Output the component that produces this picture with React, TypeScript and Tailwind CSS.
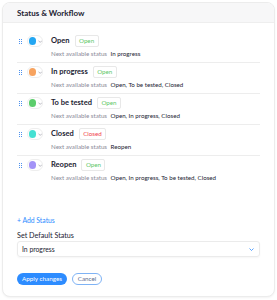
import React from "react";

type Row = { name: string; color: string; badge: string; badgeColor: string; next: string };

const rows: Row[] = [
  { name: "Open", color: "bg-[#23a6f2]", badge: "Open", badgeColor: "text-[#5cc767]", next: "In progress" },
  { name: "In progress", color: "bg-[#f7a35f]", badge: "Open", badgeColor: "text-[#5cc767]", next: "Open, To be tested, Closed" },
  { name: "To be tested", color: "bg-[#5ccd6c]", badge: "Open", badgeColor: "text-[#5cc767]", next: "Open, In progress, Closed" },
  { name: "Closed", color: "bg-[#45e0d2]", badge: "Closed", badgeColor: "text-[#f0424c]", next: "Reopen" },
  { name: "Reopen", color: "bg-[#a393f7]", badge: "Open", badgeColor: "text-[#5cc767]", next: "Open, In progress, To be tested, Closed" },
];

function Handle() {
  return (
    <div className="grid grid-cols-2 gap-x-[1px] gap-y-[1px] w-[3px]">
      {[0, 1, 2, 3, 4, 5].map((i) => (
        <span key={i} className="block w-[1px] h-[1px] bg-[#4d92ef]" />
      ))}
    </div>
  );
}

function Chevron({ className }: { className?: string }) {
  return (
    <svg width="5" height="3" viewBox="0 0 5 3" className={className}>
      <path d="M0.5 0.5 L2.5 2.5 L4.5 0.5" fill="none" stroke="currentColor" strokeWidth="0.8" />
    </svg>
  );
}

export default function App() {
  return (
    <div className="w-[277px] h-[300px] bg-white p-[2px] font-['Lato','Noto_Sans',sans-serif] text-[#232333]">
      <div className="h-[295px] rounded-[8px] border border-[#ececec] shadow-[0_1px_2px_rgba(0,0,0,0.05)] overflow-hidden flex flex-col bg-white">
        <div className="h-[20px] shrink-0 bg-[#f7f7f8] border-b border-[#eeeeee] px-[14px] flex items-center text-[8px] font-bold">
          Status &amp; Workflow
        </div>
        <div className="px-[14px] pt-[9px] flex flex-col">
          {rows.map((r, i) => (
            <div
              key={r.name}
              className={`flex pt-[3px] pb-[4px] ${i < rows.length - 1 ? "border-b border-[#ededed]" : ""}`}
            >
              <div className="w-[34px] shrink-0 h-[12px] flex items-center pl-[2px]">
                <Handle />
                <div className="ml-[5px] h-[12px] w-[16px] rounded-full border border-[#eeeeee] flex items-center pl-[1px]">
                  <span className={`block w-[8px] h-[8px] rounded-full ${r.color}`} />
                  <Chevron className="ml-[1.5px] text-[#9a9aa6]" />
                </div>
              </div>
              <div className="flex flex-col">
                <div className="h-[12px] flex items-center">
                  <span className="text-[7.5px] font-bold">{r.name}</span>
                  <span
                    className={`ml-[5px] h-[12px] px-[3.5px] border border-[#e8e8e8] rounded-[2px] flex items-center text-[6.2px] ${r.badgeColor}`}
                  >
                    {r.badge}
                  </span>
                </div>
                <div className="mt-[2px] h-[9px] flex items-center text-[6.2px]">
                  <span className="text-[#8a8a99]">Next available status</span>
                  <span className="ml-[3.5px] text-[#232333]">{r.next}</span>
                </div>
              </div>
            </div>
          ))}
          <div className="mt-[29px] h-[10px] flex items-center text-[6.8px] text-[#2d8cff]">+ Add Status</div>
          <div className="mt-[6px] h-[10px] flex items-center text-[7.2px]">Set Default Status</div>
          <div className="h-[16px] border border-[#ebebeb] rounded-[3px] shadow-[0_1px_2px_rgba(0,0,0,0.04)] flex items-center justify-between pl-[4px] pr-[5px] text-[6.8px]">
            <span>In progress</span>
            <Chevron className="text-[#2d8cff]" />
          </div>
          <div className="mt-[16px] flex items-center gap-[5px]">
            <button className="h-[12px] w-[50px] rounded-full bg-[#2d8cff] text-white text-[6.3px] flex items-center justify-center">
              Apply changes
            </button>
            <button className="h-[12px] w-[30px] rounded-full border border-[#7fb3f5] text-[#5b6f8f] text-[6.3px] flex items-center justify-center">
              Cancel
            </button>
          </div>
        </div>
      </div>
    </div>
  );
}
